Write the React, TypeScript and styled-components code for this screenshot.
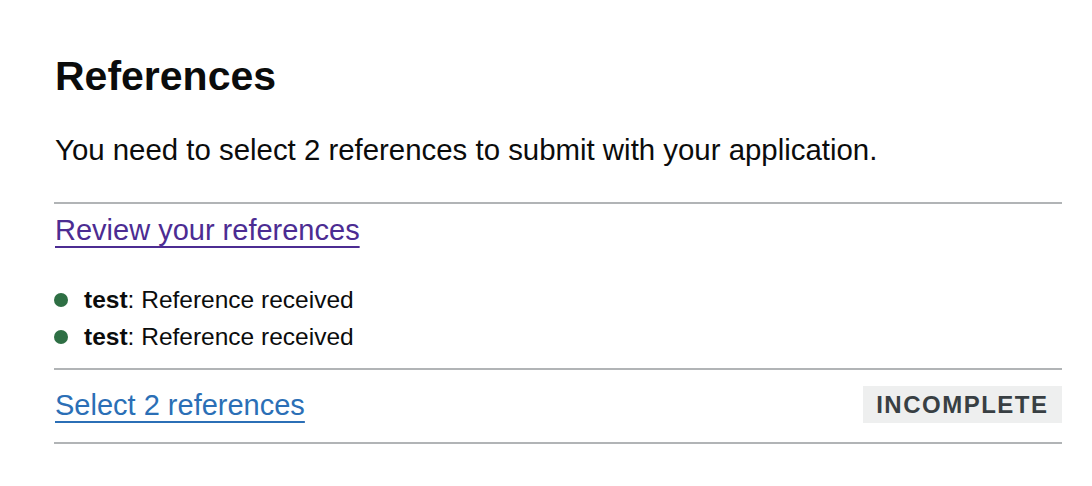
import React from "react";
import styled, { createGlobalStyle } from "styled-components";

const GlobalStyle = createGlobalStyle`
  html, body {
    margin: 0;
    padding: 0;
    background: #ffffff;
  }
  body {
    font-family: "Liberation Sans", Arial, sans-serif;
    color: #0b0c0c;
  }
`;

const Page = styled.main`
  width: 1008px;
  padding: 52px 0 0 54px;
`;

const Heading = styled.h2`
  margin: 0 0 0 1px;
  font-size: 41px;
  line-height: 48px;
  font-weight: 700;
  color: #0b0c0c;
`;

const Lead = styled.p`
  margin: 32px 0 34px 1px;
  font-size: 29.4px;
  line-height: 36px;
  color: #0b0c0c;
`;

const Section = styled.section<{ $last?: boolean }>`
  border-top: 2px solid #b1b4b6;
  border-bottom: ${(p) => (p.$last ? "2px solid #b1b4b6" : "none")};
`;

const ReviewBlock = styled.div`
  padding: 8px 0 13px 1px;
`;

const TaskRow = styled.div`
  display: flex;
  align-items: center;
  justify-content: space-between;
  padding: 16px 0 19px 1px;
`;

const Link = styled.a<{ $visited?: boolean }>`
  display: inline-block;
  font-size: 29px;
  line-height: 36px;
  color: ${(p) => (p.$visited ? "#4c2c92" : "#2b6fb6")};
  text-decoration: underline;
  text-decoration-thickness: 2px;
  text-underline-offset: 6px;
  cursor: pointer;
`;

const RefList = styled.ul`
  list-style: none;
  margin: 33px 0 0 -1px;
  padding: 0;
`;

const RefItem = styled.li`
  display: flex;
  align-items: center;
  gap: 16px;
  font-size: 24.5px;
  line-height: 37px;
  color: #0b0c0c;
`;

const Dot = styled.span`
  width: 14px;
  height: 14px;
  border-radius: 50%;
  background: #2e6f44;
  flex: none;
`;

const Name = styled.strong`
  font-weight: 700;
`;

const Tag = styled.strong`
  display: inline-flex;
  align-items: center;
  height: 37px;
  box-sizing: border-box;
  padding: 0 13.5px 0 13px;
  background: #eeefef;
  color: #383f43;
  font-size: 24px;
  font-weight: 700;
  letter-spacing: 1.5px;
  text-transform: uppercase;
`;

const references = [
  { name: "test", status: "Reference received" },
  { name: "test", status: "Reference received" },
];

export default function App() {
  return (
    <>
      <GlobalStyle />
      <Page>
        <Heading>References</Heading>
        <Lead>You need to select 2 references to submit with your application.</Lead>
        <Section>
          <ReviewBlock>
            <Link $visited href="#">Review your references</Link>
            <RefList>
              {references.map((r, i) => (
                <RefItem key={i}>
                  <Dot />
                  <span>
                    <Name>{r.name}</Name>: {r.status}
                  </span>
                </RefItem>
              ))}
            </RefList>
          </ReviewBlock>
        </Section>
        <Section $last>
          <TaskRow>
            <Link href="#">Select 2 references</Link>
            <Tag>Incomplete</Tag>
          </TaskRow>
        </Section>
      </Page>
    </>
  );
}
